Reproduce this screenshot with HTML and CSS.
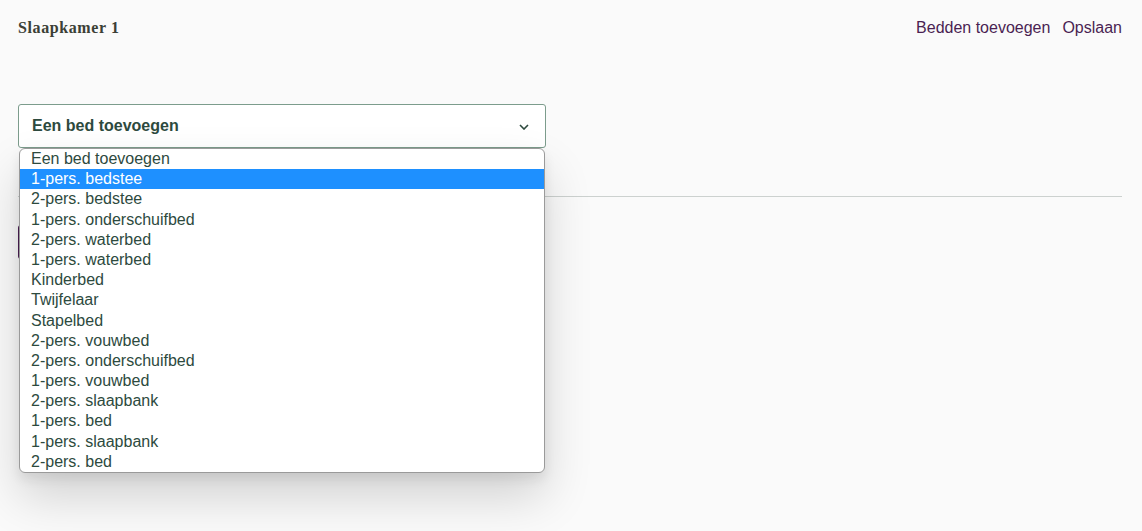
FILE: index.html
```html
<!DOCTYPE html>
<html lang="nl">
<head>
<meta charset="utf-8">
<title>Slaapkamer 1</title>
<link rel="stylesheet" href="styles.css">
</head>
<body>
<header class="topbar">
  <h1 class="title">Slaapkamer 1</h1>
  <nav class="actions">
    <a class="action" href="#">Bedden toevoegen</a>
    <a class="action" href="#">Opslaan</a>
  </nav>
</header>
<main class="content">
  <div class="select-wrap">
    <div class="select">
      <span class="select-label">Een bed toevoegen</span>
      <svg class="chevron" width="10" height="6" viewBox="0 0 10 6"><path d="M1 1l4 4 4-4" fill="none" stroke="#2d4a3e" stroke-width="1.6"/></svg>
    </div>
    <ul class="listbox">
      <li class="opt">Een bed toevoegen</li>
      <li class="opt active">1-pers. bedstee</li>
      <li class="opt">2-pers. bedstee</li>
      <li class="opt">1-pers. onderschuifbed</li>
      <li class="opt">2-pers. waterbed</li>
      <li class="opt">1-pers. waterbed</li>
      <li class="opt">Kinderbed</li>
      <li class="opt">Twijfelaar</li>
      <li class="opt">Stapelbed</li>
      <li class="opt">2-pers. vouwbed</li>
      <li class="opt">2-pers. onderschuifbed</li>
      <li class="opt">1-pers. vouwbed</li>
      <li class="opt">2-pers. slaapbank</li>
      <li class="opt">1-pers. bed</li>
      <li class="opt">1-pers. slaapbank</li>
      <li class="opt">2-pers. bed</li>
    </ul>
  </div>
  <hr class="divider">
  <button class="primary" aria-label="Bed toevoegen"></button>
</main>
</body>
</html>
```

FILE: styles.css
```css
html, body {
  margin: 0;
  padding: 0;
  background: #fafafa;
  height: 100%;
}
body {
  font-family: "Liberation Sans", Arial, sans-serif;
  color: #2d4a3e;
}
.topbar {
  display: flex;
  justify-content: space-between;
  align-items: center;
  padding: 17px 20px 0 18px;
  height: 22px;
}
.title {
  margin: 0;
  font-family: "Liberation Serif", "DejaVu Serif", serif;
  font-weight: bold;
  font-size: 16px;
  color: #3b4036;
  letter-spacing: 0.6px;
}
.actions {
  display: flex;
  gap: 12px;
}
.action {
  color: #4a1f52;
  text-decoration: none;
  font-size: 16px;
}
.content {
  padding: 65px 20px 0 18px;
}
.select-wrap {
  position: relative;
  width: 528px;
}
.select {
  box-sizing: border-box;
  height: 44px;
  border: 1px solid #7c9c8c;
  border-radius: 3px;
  background: #fff;
  display: flex;
  align-items: center;
  justify-content: space-between;
  padding: 0 16px 0 13px;
}
.select-label {
  font-weight: bold;
  font-size: 16px;
  color: #2d4a3e;
}
.chevron {
  margin-top: 2px;
}
.listbox {
  position: absolute;
  left: 1px;
  top: 44px;
  width: 526px;
  box-sizing: border-box;
  margin: 0;
  padding: 0;
  list-style: none;
  background: #fff;
  border: 1px solid #9a9a9a;
  border-radius: 6px;
  box-shadow: 0 24px 48px rgba(0, 0, 0, 0.16), 0 6px 12px rgba(0, 0, 0, 0.08);
  overflow: hidden;
  z-index: 10;
}
.opt {
  font-size: 16px;
  line-height: 19px;
  height: 20.2px;
  padding-left: 11px;
  color: #2d4a3e;
  white-space: nowrap;
}
.opt.active {
  background: #1e90ff;
  color: #fff;
}
.divider {
  border: 0;
  border-top: 1px solid #ccd1cf;
  margin: 48px 0 0;
}
.primary {
  display: block;
  margin-top: 28px;
  height: 34px;
  width: 160px;
  border: 0;
  border-radius: 3px;
  background: #4a1f52;
}
```
